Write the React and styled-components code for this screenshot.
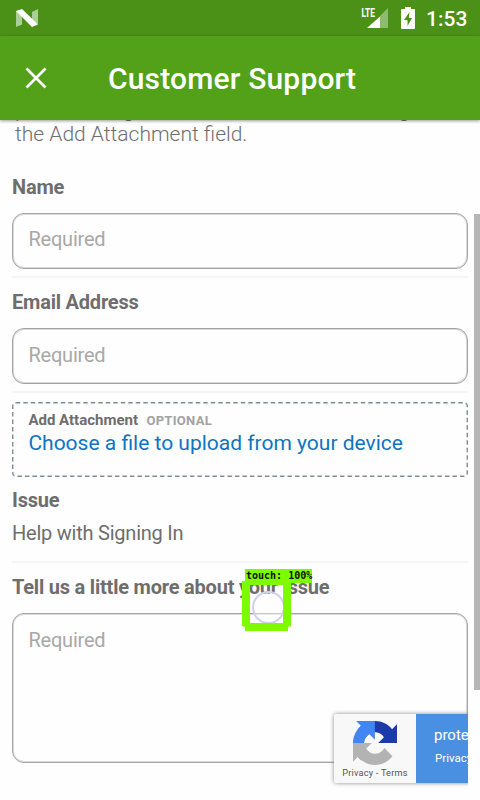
import React from 'react';
import styled, { createGlobalStyle } from 'styled-components';

const GlobalStyle = createGlobalStyle`
  * { box-sizing: border-box; }
  body { margin: 0; background: #fefefe; font-family: Roboto, "Liberation Sans", sans-serif; }
`;

const Screen = styled.div`
  position: relative;
  width: 480px;
  height: 800px;
  overflow: hidden;
  display: flex;
  flex-direction: column;
  color: #6e6e6e;
`;

const StatusBar = styled.div`
  flex: none;
  height: 36px;
  background: #4b9017;
  display: flex;
  align-items: center;
  justify-content: space-between;
  padding: 0 12px 0 16px;
  color: #fff;
`;

const StatusIcons = styled.div`
  display: flex;
  align-items: center;
`;

const Signal = styled.svg`
  margin-right: 13px;
  overflow: visible;
`;

const Battery = styled.svg`
  margin-right: 11px;
`;

const Clock = styled.span`
  font-size: 21px;
  font-weight: 500;
  line-height: 36px;
  padding-top: 1px;
  width: 42px;
  white-space: nowrap;
`;

const AppBar = styled.header`
  flex: none;
  position: relative;
  height: 84px;
  background: #52a118;
  box-shadow: 0 1px 3px rgba(0, 0, 0, 0.4);
  display: flex;
  align-items: center;
  padding-left: 25px;
  z-index: 1;
`;

const Title = styled.h1`
  margin: 1px 0 0 61px;
  font-size: 30px;
  font-weight: 500;
  line-height: 36px;
  color: #fff;
  letter-spacing: 0.17px;
  white-space: nowrap;
`;

const Body = styled.main`
  flex: none;
  height: 680px;
  display: flex;
  justify-content: space-between;
`;

const Form = styled.form`
  width: 456px;
  margin-left: 12px;
  display: flex;
  flex-direction: column;
`;

const Intro = styled.p`
  margin: -24px 0 0 3px;
  height: 75px;
  padding-top: 2px;
  font-size: 21px;
  font-weight: 300;
  line-height: 24px;
  white-space: nowrap;
`;

const Field = styled.section`
  height: ${(p) => p.$height}px;
  padding-top: ${(p) => p.$top}px;
  border-bottom: ${(p) => (p.$divider ? '2px solid #f6f6f6' : '0')};
`;

const Label = styled.label`
  display: block;
  height: 24px;
  line-height: 24px;
  font-size: 20px;
  font-weight: 700;
  letter-spacing: -0.21px;
  white-space: nowrap;
`;

const Box = styled.div`
  height: ${(p) => p.$height}px;
  margin-top: 14px;
  border: 1px solid #a5a5a8;
  box-shadow: inset 0 0 0 1px #d9d9db;
  border-radius: 12px;
  padding: ${(p) => p.$inset || 12}px 15px;
  font-size: 20px;
  line-height: 27px;
  letter-spacing: -0.2px;
  text-indent: 0.4px;
  color: #a8a8a8;
  background: #fefefe;
`;

const Upload = styled.div`
  position: relative;
  flex: none;
  height: 75px;
  margin-top: 9px;
  padding: 9px 16px;
`;

const DashedFrame = styled.svg`
  position: absolute;
  inset: 0;
`;

const UploadHead = styled.div`
  display: flex;
  align-items: baseline;
  gap: 8px;
  height: 18px;
  line-height: 18px;
  font-size: 15px;
  font-weight: 700;
  white-space: nowrap;
  text-indent: 0.4px;
`;

const Optional = styled.span`
  font-size: 13px;
  font-weight: 700;
  letter-spacing: 0.3px;
  color: #a2a2a5;
`;

const UploadLink = styled.div`
  margin-top: 1px;
  font-size: 21px;
  line-height: 26px;
  text-indent: 0.4px;
  color: #0d75c2;
  white-space: nowrap;
`;

const Value = styled.div`
  margin-top: 9px;
  font-size: 20px;
  line-height: 24px;
  letter-spacing: -0.23px;
`;

const ScrollThumb = styled.div`
  width: 6px;
  height: 476px;
  margin-top: 94px;
  background: #b6b6b6;
`;

const Badge = styled.aside`
  position: absolute;
  left: 326px;
  top: 706px;
  width: 142px;
  height: 86px;
  padding: 8px 0 8px 8px;
  overflow: hidden;
`;

const BadgeCard = styled.div`
  width: 150px;
  height: 69px;
  display: flex;
  border-radius: 2px;
  box-shadow: 0 0 4px #888;
  background: #f8f8f8;
`;

const BadgeLogo = styled.div`
  flex: none;
  width: 82px;
  display: flex;
  flex-direction: column;
  align-items: center;
  gap: 2px;
  padding-top: 7px;
  font-size: 9.2px;
  line-height: 12px;
  letter-spacing: 0.2px;
  color: #555;
  white-space: nowrap;
`;

const BadgeText = styled.div`
  flex: 1;
  background: #4a90e2;
  color: #fff;
  padding: 11px 0 0 18px;
  overflow: hidden;
  white-space: nowrap;
  font-size: 15px;
  line-height: 20px;
`;

const BadgeSmall = styled.div`
  margin: 3px 0 0 1px;
  font-size: 11.5px;
`;

const Touch = styled.div`
  position: absolute;
  left: 242px;
  top: 569px;
`;

const TouchLabel = styled.div`
  position: absolute;
  left: 3px;
  top: 0;
  width: 67px;
  height: 14px;
  background: #7ffb00;
  color: #071200;
  font: bold 10px/14px "DejaVu Sans Mono", monospace;
  padding-left: 1px;
  white-space: nowrap;
`;

export default function App() {
  return (
    <>
      <GlobalStyle />
      <Screen>
        <StatusBar>
          <svg width="22" height="19" viewBox="0 0 22 19">
            <path d="M0 2v16l6-2.500V5z" fill="#a9cf92" />
            <path d="M22 0v15l-6-2V3z" fill="#a9cf92" />
            <path d="M0 2l6-2 16 15.500-6 2.500z" fill="#fff" />
          </svg>
          <StatusIcons>
            <Signal width="27" height="22" viewBox="0 0 27 22">
              <path d="M27 1v20H19V9z" fill="#8dbc70" />
              <path d="M19 9.500V21H6z" fill="#fff" />
              <text x="0.500" y="9.600" fontSize="12.500" fontWeight="700" fill="#fff" textLength="13.500" lengthAdjust="spacingAndGlyphs">
                LTE
              </text>
            </Signal>
            <Battery width="14" height="22" viewBox="0 0 14 22">
              <path d="M4 0h6v2h3q1 0 1 1v18q0 1-1 1H1q-1 0-1-1V3q0-1 1-1h3z" fill="#fff" />
              <path d="M8.500 5L3 13h3.500v6L11 11H7.800z" fill="#4b9017" />
            </Battery>
            <Clock>1:53</Clock>
          </StatusIcons>
        </StatusBar>
        <AppBar>
          <svg width="22" height="22" viewBox="0 0 22 22">
            <path d="M1.500 1.500l19 19M20.500 1.500l-19 19" stroke="#fff" strokeWidth="2.700" />
          </svg>
          <Title>Customer Support</Title>
        </AppBar>
        <Body>
          <Form>
            <Intro>
              picture along with the details to them using
              <br />
              the Add Attachment field.
            </Intro>
            <Field $height={107} $top={4} $divider>
              <Label>Name</Label>
              <Box $height={56}>Required</Box>
            </Field>
            <Field $height={115} $top={12} $divider>
              <Label>Email Address</Label>
              <Box $height={56} $inset={13}>Required</Box>
            </Field>
            <Upload>
              <DashedFrame width="456" height="75">
                <rect x=".75" y=".75" width="454.500" height="73.500" rx="3" fill="none" stroke="#828c98" strokeWidth="1.400" strokeDasharray="4.500 3" />
              </DashedFrame>
              <UploadHead>
                Add Attachment <Optional>OPTIONAL</Optional>
              </UploadHead>
              <UploadLink>Choose a file to upload from your device</UploadLink>
            </Upload>
            <Field $height={86} $top={11} $divider>
              <Label>Issue</Label>
              <Value>Help with Signing In</Value>
            </Field>
            <Field $height={200} $top={12}>
              <Label>Tell us a little more about your issue</Label>
              <Box $height={150} $inset={13}>Required</Box>
            </Field>
          </Form>
          <ScrollThumb />
        </Body>
        <Badge>
          <BadgeCard>
            <BadgeLogo>
              <svg width="44" height="44" viewBox="0 0 64 64">
                <path fill="#1c3aa9" d="M64 31.955l-.033-1.370V4.687l-7.160 7.160C50.948 4.674 42.033.093 32.050.093c-10.400 0-19.622 4.960-25.458 12.640l11.736 11.860a15.550 15.550 0 0 1 4.754-5.334c2.050-1.600 4.952-2.906 8.968-2.906.485 0 .860.057 1.135.163 4.976.393 9.288 3.140 11.828 7.124l-8.307 8.307L64 31.953" />
                <path fill="#4285f4" d="M31.862.094l-1.370.033H4.594l7.160 7.160C4.580 13.147 0 22.060 0 32.046c0 10.400 4.960 19.622 12.640 25.458L24.500 45.768a15.550 15.550 0 0 1-5.334-4.754c-1.600-2.050-2.906-4.952-2.906-8.968 0-.485.057-.860.163-1.135.393-4.976 3.140-9.288 7.124-11.828l8.307 8.307L31.860.095" />
                <path fill="#b3b3b3" d="M.001 32.045l.033 1.370v25.898l7.160-7.160c5.860 7.173 14.774 11.754 24.760 11.754 10.400 0 19.622-4.960 25.458-12.640l-11.736-11.860a15.550 15.550 0 0 1-4.754 5.334c-2.050 1.600-4.952 2.906-8.968 2.906-.485 0-.860-.057-1.135-.163-4.976-.393-9.288-3.140-11.828-7.124l8.307-8.307c-10.522.040-22.400.066-27.295-.005" />
              </svg>
              <span>Privacy - Terms</span>
            </BadgeLogo>
            <BadgeText>
              protected
              <BadgeSmall>Privacy</BadgeSmall>
            </BadgeText>
          </BadgeCard>
        </Badge>
        <Touch>
          <svg width="50" height="63" viewBox="0 0 50 63">
            <circle cx="26.500" cy="38.500" r="15.500" fill="#fff" fillOpacity=".4" stroke="#d0d2ec" strokeWidth="2" />
            <path fill="#7ffb00" fillRule="evenodd" d="M0 12h49v45l-3 1v4H3v-4L0 57zM8 16v38h33V16z" />
          </svg>
          <TouchLabel>touch: 100%</TouchLabel>
        </Touch>
      </Screen>
    </>
  );
}
